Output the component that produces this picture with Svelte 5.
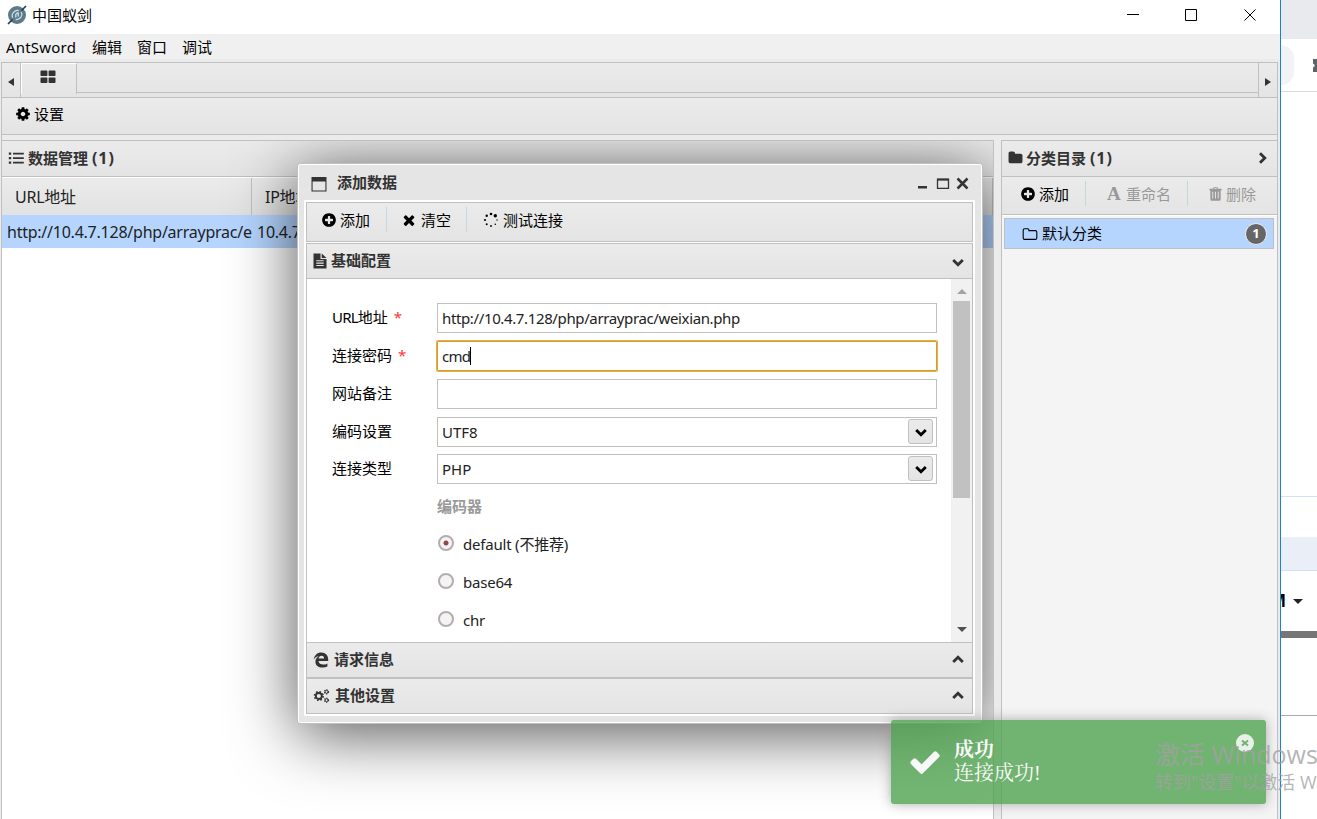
<script lang="ts">
	type Item = { icon: string; label: string; off?: boolean };

	const menu: string[] = ['AntSword', '编辑', '窗口', '调试'];

	const categoryTools: Item[] = [
		{ icon: 'plus', label: '添加' },
		{ icon: 'font', label: '重命名', off: true },
		{ icon: 'trash', label: '删除', off: true }
	];

	const dialogTools: Item[] = [
		{ icon: 'plus', label: '添加' },
		{ icon: 'times', label: '清空' },
		{ icon: 'spinner', label: '测试连接' }
	];

	const encoders: string[] = ['default (不推荐)', 'base64', 'chr'];
	let encoder = $state(encoders[0]);

	let toast = $state(true);
</script>

{#snippet icon(name: string)}
	{#if name == 'font'}
		<b class="icon-font">A</b>
	{:else}
		<svg class="icon {name}" viewBox={['plus', 'cog', 'times', 'check', 'folder'].includes(name) ? '0 0 1792 1792' : '0 0 16 16'}>
			{#if name == 'plus'}
				<path d="M1344 960v-128q0-26-19-45t-45-19h-256v-256q0-26-19-45t-45-19h-128q-26 0-45 19t-19 45v256h-256q-26 0-45 19t-19 45v128q0 26 19 45t45 19h256v256q0 26 19 45t45 19h128q26 0 45-19t19-45v-256h256q26 0 45-19t19-45zm320-64q0 209-103 385.5t-279.5 279.5-385.5 103-385.5-103-279.5-279.5-103-385.5 103-385.5 279.5-279.5 385.5-103 385.5 103 279.5 279.5 103 385.5z" />
			{:else if name == 'cog'}
				<path d="M1152 896q0-106-75-181t-181-75-181 75-75 181 75 181 181 75 181-75 75-181zm512-109v222q0 12-8 23t-20 13l-185 28q-19 54-39 91 35 50 107 138 10 12 10 25t-9 23q-27 37-99 108t-94 71q-12 0-26-9l-138-108q-44 23-91 38-16 136-29 186-7 28-36 28h-222q-14 0-24.5-8.5t-11.5-21.5l-28-184q-49-16-90-37l-141 107q-10 9-25 9-14 0-25-11-126-114-165-168-7-10-7-23 0-12 8-23 15-21 51-66.5t54-70.5q-27-50-41-99l-183-27q-13-2-21-12.5t-8-23.5v-222q0-12 8-23t19-13l186-28q14-46 39-92-40-57-107-138-10-12-10-24 0-10 9-23 26-36 98.5-107.5t94.5-71.5q13 0 26 10l138 107q44-23 91-38 16-136 29-186 7-28 36-28h222q14 0 24.5 8.5t11.5 21.5l28 184q49 16 90 37l142-107q9-9 24-9 13 0 25 10 129 119 165 170 7 8 7 22 0 12-8 23-15 21-51 66.5t-54 70.5q26 50 41 98l183 28q13 2 21 12.5t8 23.5z" />
			{:else if name == 'times'}
				<path d="M1490 1322q0 40-28 68l-136 136q-28 28-68 28t-68-28l-294-294-294 294q-28 28-68 28t-68-28l-136-136q-28-28-28-68t28-68l294-294-294-294q-28-28-28-68t28-68l136-136q28-28 68-28t68 28l294 294 294-294q28-28 68-28t68 28l136 136q28 28 28 68t-28 68l-294 294 294 294q28 28 28 68z" />
			{:else if name == 'check'}
				<path d="M1671 566q0 40-28 68l-724 724-136 136q-28 28-68 28t-68-28l-136-136-362-362q-28-28-28-68t28-68l136-136q28-28 68-28t68 28l294 295 656-657q28-28 68-28t68 28l136 136q28 28 28 68z" />
			{:else if name == 'folder'}
				<path d="M1728 608v704q0 92-66 158t-158 66h-1216q-92 0-158-66t-66-158v-960q0-92 66-158t158-66h320q92 0 158 66t66 158v32h672q92 0 158 66t66 158z" />
			{:else if name == 'folder-o'}
				<path class="line" d="M1.2 12V4Q1.2 2.7 2.5 2.7H5.7Q6.9 2.7 6.9 4V4.6H13.3Q14.8 4.6 14.8 6V12Q14.8 13.4 13.3 13.4H2.6Q1.2 13.4 1.2 12Z" />
			{:else if name == 'grid'}
				<path d="M1.3 1.5H6.6Q7.4 1.500 7.400 2.300V6.200Q7.400 7 6.600 7H1.300Q.5 7 .5 6.200V2.300Q.5 1.500 1.300 1.500ZM9.400 1.500H14.700Q15.500 1.500 15.500 2.300V6.200Q15.500 7 14.700 7H9.400Q8.600 7 8.600 6.200V2.300Q8.600 1.500 9.400 1.500ZM1.300 8.500H6.600Q7.400 8.500 7.400 9.300V13.200Q7.400 14 6.600 14H1.300Q.5 14 .5 13.200V9.300Q.5 8.500 1.300 8.500ZM9.400 8.500H14.700Q15.500 8.500 15.500 9.300V13.200Q15.500 14 14.700 14H9.400Q8.600 14 8.600 13.200V9.300Q8.600 8.500 9.400 8.500Z" />
			{:else if name == 'bars'}
				<path d="M.8 2.5h2.4v2.2H.8zM.8 7h2.4v2.2H.8zM.8 11.500h2.400v2.200H.8zM5 2.700h10.800v1.800H5zM5 7.200h10.800v1.800H5zM5 11.700h10.800v1.800H5z" />
			{:else if name == 'trash'}
				<path fill-rule="evenodd" d="M5.2 2.3 6 .8h4l.8 1.5h3.7v1.9h-1v9.400q0 1.600-1.500 1.600H4q-1.500 0-1.500-1.600V4.200h-1V2.300ZM6.500 2.300h3L9.200 1.700H6.800ZM4.600 5.600V12.800h1V5.600ZM7.500 5.600V12.800h1V5.600ZM10.400 5.600V12.800h1V5.600Z" />
			{:else if name == 'spinner'}
				<circle cx="8" cy="2" r="1.300" />
				<circle cx="12.300" cy="3.700" r="1.700" />
				<circle cx="14" cy="8" r=".7" />
				<circle cx="12.300" cy="12.300" r=".8" />
				<circle cx="8" cy="14" r=".9" />
				<circle cx="3.700" cy="12.300" r="1" />
				<circle cx="2" cy="8" r="1.100" />
				<circle cx="3.700" cy="3.700" r="1.200" />
			{:else if name == 'file'}
				<path fill-rule="evenodd" d="M1.500 .5H8.500V6H14.500V15.500H1.500ZM9.700 .5 14.500 4.900H9.700ZM4.300 7.200V8.300H11.700V7.200ZM4.300 9.600V10.700H11.700V9.600ZM4.300 12V13.100H11.700V12Z" />
			{:else if name == 'edge'}
				<path d="M.7 7.600C1.300 3.200 4.300 .5 8.300 .5C12.600 .5 15.200 3.400 15.200 7.400V9.100H5.500C5.700 11.500 7.800 12.600 10.200 12.600C11.800 12.600 13.100 12.200 14.400 11.400V14.500C13 15.200 11.500 15.600 9.700 15.600C5.300 15.600 2.400 13.400 2.400 9.700C2.400 7.300 3.700 5.400 5.700 4.300C3.600 4.400 1.900 5.600 .7 7.600ZM5.600 6.500H11.100C11.100 4.700 10.200 3.700 8.500 3.700C6.900 3.700 5.900 4.800 5.600 6.500Z" fill-rule="evenodd" />
			{:else if name == 'cogs'}
				<circle class="teeth" cx="5.300" cy="8" r="4.300" />
				<circle class="ring" cx="5.300" cy="8" r="3" />
				<circle class="teeth s" cx="13" cy="3.800" r="2" />
				<circle class="ring s" cx="13" cy="3.800" r="1.500" />
				<circle class="teeth s" cx="13" cy="12.200" r="2" />
				<circle class="ring s" cx="13" cy="12.200" r="1.500" />
			{:else if name == 'chevron'}
				<path class="thick" d="M3.200 6 8 10.800 12.800 6" />
			{:else if name == 'pane'}
				<path fill-rule="evenodd" d="M.5 1H15.500V15.500H.5ZM1.600 5.500V14.400H14.400V5.500Z" />
			{/if}
		</svg>
	{/if}
{/snippet}

{#snippet tools(items: Item[])}
	{#each items as item, i}
		{#if i}<i class="sep"></i>{/if}
		<span class="tool" class:off={item.off}>{@render icon(item.icon)}{item.label}</span>
	{/each}
{/snippet}

<div class="desktop">
	<div class="window">
		<header class="title">
			<svg class="logo" viewBox="0 0 20 20">
				<circle cx="10" cy="10" r="9" fill="#5c7c8c" />
				<ellipse cx="10" cy="10" rx="5" ry="4.300" fill="none" stroke="#d5e0e5" stroke-width="1.300" stroke-dasharray="11 3.600" transform="rotate(-35 10 10)" />
				<path d="M8.800 12.500V9.500Q10 7.300 11.300 8V11.500" fill="none" stroke="#d5e0e5" stroke-width="1.300" />
				<path d="M1 19 5.500 14.500M14.500 5.500 19 1" stroke="#263c48" stroke-width="1.600" />
			</svg>
			<span>中国蚁剑</span>
			<svg class="controls" viewBox="0 0 130 14">
				<path d="M0 6.500H12M58.500 1.500H69.500V12.500H58.500ZM117.500 1.500 128.500 12.500M128.500 1.500 117.500 12.500" fill="none" stroke="#000" />
			</svg>
		</header>
		<nav>
			{#each menu as label}<span>{label}</span>{/each}
		</nav>

		<div class="frame">
			<div class="tabs">
				<div class="arrow"><i class="left"></i></div>
				<div class="tab">{@render icon('grid')}</div>
				<div class="track"></div>
				<div class="arrow end"><i class="right"></i></div>
			</div>
			<div class="bar settings"><span class="tool">{@render icon('cog')}设置</span></div>

			<div class="columns">
				<section class="data">
					<h2>{@render icon('bars')}<span>数据管理 <em>(1)</em></span></h2>
					<div class="row head"><span>URL地址</span><span>IP地址</span></div>
					<div class="row"><span>http://10.4.7.128/php/arrayprac/e</span><span>10.4.7.128</span></div>

					<div class="dialog">
						<div class="caption">
							{@render icon('pane')}<span>添加数据</span>
							<svg class="buttons" viewBox="0 0 52 14">
								<path d="M0 10H9V12.500H0Z" fill="#333" />
								<path d="M19.500 3.500H30.500V12.300H19.500Z" fill="none" stroke="#333" stroke-width="1.300" />
								<path d="M19 2.500H31V4.500H19Z" fill="#333" />
								<path d="M39.500 2.500 49.500 12.500M49.500 2.500 39.500 12.500" stroke="#333" stroke-width="2.500" />
							</svg>
						</div>
						<div class="content">
							<div class="bar">{@render tools(dialogTools)}</div>
							<h3 class="open">{@render icon('file')}<span>基础配置</span>{@render icon('chevron')}</h3>
							<div class="body">
								<div class="form">
									<div class="field"><span><s>URL</s>地址 <em>*</em></span><div class="input url">http://10.4.7.128/php/arrayprac/weixian.php</div></div>
									<div class="field"><span>连接密码 <em>*</em></span><div class="input url focus">cmd<i></i></div></div>
									<div class="field"><span>网站备注</span><div class="input"></div></div>
									<div class="field"><span>编码设置</span><div class="input">UTF8<u>{@render icon('chevron')}</u></div></div>
									<div class="field"><span>连接类型</span><div class="input">PHP<u>{@render icon('chevron')}</u></div></div>
									<div class="encoder">
										<strong>编码器</strong>
										{#each encoders as name}
											<button onclick={() => (encoder = name)}>
												<i class:on={encoder == name}></i><span>{name}</span>
											</button>
										{/each}
									</div>
								</div>
								<div class="scroll"><i class="up"></i><div class="thumb"></div><i class="down"></i></div>
							</div>
							<h3>{@render icon('edge')}<span>请求信息</span>{@render icon('chevron')}</h3>
							<h3>{@render icon('cogs')}<span>其他设置</span>{@render icon('chevron')}</h3>
						</div>
					</div>
				</section>
				<section class="category">
					<h2>{@render icon('folder')}<span>分类目录 <em>(1)</em></span>{@render icon('chevron')}</h2>
					<div class="bar">{@render tools(categoryTools)}</div>
					<div class="list">
						<div class="entry">{@render icon('folder-o')}<span>默认分类</span><b class="count">1</b></div>
					</div>
				</section>
			</div>
		</div>
	</div>

	<!-- browser window peeking out behind -->
	<aside>
		<div class="strip"></div>
		<div class="address"><i class="round"></i>
			<svg viewBox="0 0 16 16"><path d="M0 2H4.500Q6 4.500 8 2H16V15H8Q6 12 4.500 15H0V10.500Q3.500 8.500 0 6.500Z" fill="#5f6368" /></svg>
		</div>
		<div class="page"></div>
		<div class="band"></div>
		<div class="select"><b>M</b><i class="down"></i></div>
		<div class="thick"></div>
		<div class="rest"></div>
	</aside>

	{#if toast}
		<div class="toast">
			{@render icon('check')}
			<div><strong>成功</strong><span>连接成功!</span></div>
			<button class="close" aria-label="close" onclick={() => (toast = false)}>
				<svg viewBox="0 0 18 18"><circle cx="9" cy="9" r="9" fill="#fff" fill-opacity=".85" /><path d="M6 6.500 12 11.500M12 6.500 6 11.500" stroke="#51a351" stroke-width="2" /></svg>
			</button>
		</div>
	{/if}

	<div class="activate"><span>激活 Windows</span><small>转到"设置"以激活 W</small></div>
</div>

<style>
	:global(body) {
		overflow: hidden;
		background: #fff;
	}
	.desktop {
		position: relative;
		display: flex;
		width: 1317px;
		height: 819px;
		overflow: hidden;
		font: 15px/20px "Noto Sans", "Noto Sans CJK SC", sans-serif;
		color: #000;
		white-space: nowrap;
	}
	.desktop :global(*) {
		box-sizing: border-box;
	}
	.window {
		display: flex;
		flex: none;
		flex-direction: column;
		width: 1281px;
		height: 819px;
		border-right: 1px solid #1683d8;
		background: #ebebeb;
	}
	h2, h3 {
		margin: 0;
		font-size: 15px;
		font-weight: 700;
		color: #333;
	}
	em {
		font-style: normal;
	}
	.icon {
		flex: none;
		width: 16px;
		height: 16px;
		fill: currentColor;
	}
	.icon .line, .icon .thick, .icon .teeth, .icon .ring {
		fill: none;
		stroke: currentColor;
		stroke-width: 1.1;
	}
	.icon .thick {
		stroke-width: 2.8;
	}
	.icon .teeth {
		stroke-width: 1.6;
		stroke-dasharray: 1.7 1.68;
	}
	.icon .ring {
		stroke-width: 1.8;
	}
	.icon .teeth.s {
		stroke-width: 1.2;
		stroke-dasharray: 1.05 1.05;
	}
	.icon .ring.s {
		stroke-width: 1;
	}

	.title {
		display: flex;
		align-items: center;
		height: 34px;
		padding: 0 23px 4px 7px;
		background: #fff;
	}
	.title span {
		margin: -1px 0 0 5px;
	}
	.logo {
		width: 20px;
		height: 20px;
	}
	.controls {
		width: 130px;
		height: 14px;
		margin-left: auto;
	}
	nav {
		display: flex;
		gap: 15px;
		height: 25px;
		padding: 3px 6px;
		background: #f0f0f0;
	}
	nav span:first-child {
		width: 71px;
		letter-spacing: .2px;
	}

	.frame {
		display: flex;
		flex: 1;
		flex-direction: column;
		min-height: 0;
		margin: 3px 2px 0 1px;
		border: solid #c0c0c0;
		border-width: 1px 1px 0;
	}
	.tabs {
		display: flex;
		height: 34px;
		background: linear-gradient(#ebebeb, #e4e4e4);
	}
	.arrow {
		display: flex;
		align-items: center;
		justify-content: center;
		width: 19px;
		padding-top: 3px;
		border-right: 1px solid #c0c0c0;
	}
	.arrow.end {
		border-right: 0;
		border-left: 1px solid #c0c0c0;
	}
	.arrow i, i.down, i.up {
		border: 4px solid transparent;
	}
	.arrow .left {
		border-left: 0;
		border-right: 6px solid #333;
	}
	.arrow .right {
		border-right: 0;
		border-left: 6px solid #333;
	}
	.tab {
		width: 56px;
		height: 31px;
		padding: 5px 0 0 18px;
		border: solid #fff;
		border-width: 1px 1px 0;
		border-right: 1px solid #c0c0c0;
		color: #333;
	}
	.track {
		flex: 1;
		height: 30px;
		border-bottom: 1px solid #c0c0c0;
	}
	.bar {
		display: flex;
		align-items: center;
		background: linear-gradient(#ebebeb, #e4e4e4);
	}
	.settings {
		height: 38px;
		padding: 0 13px 4px;
		border: solid #c0c0c0;
		border-width: 1px 0;
	}
	.tool {
		display: flex;
		align-items: center;
		gap: 3px;
	}
	.tool.off {
		color: #999;
	}
	.icon-font {
		width: 17px;
		padding-left: 1px;
		font: bold 19px/20px "Liberation Serif", serif;
	}
	.icon.trash {
		width: 15px;
	}
	.sep {
		width: 1px;
		height: 25px;
		background: #c4d8de;
	}

	.columns {
		display: flex;
		flex: 1;
		gap: 7px;
		min-height: 0;
		margin-top: 5px;
	}
	section {
		display: flex;
		flex: none;
		flex-direction: column;
		border-top: 1px solid #c0c0c0;
	}
	h2 {
		display: flex;
		align-items: center;
		height: 36px;
		padding: 0 7px 1px 6px;
		border-bottom: 1px solid #c0c0c0;
		background: linear-gradient(#ebebeb, #e4e4e4);
	}
	h2 span {
		flex: 1;
		margin: -1px 0 0 4px;
	}
	h2 em {
		font-size: 16px;
		letter-spacing: 1px;
	}
	h2 .folder {
		width: 15px;
		margin-right: -1px;
	}
	h2 .chevron {
		transform: rotate(-90deg);
	}
	.data {
		position: relative;
		width: 992px;
		overflow: hidden;
		border-right: 1px solid #c0c0c0;
		background: #fff;
	}
	.row {
		display: grid;
		grid-template-columns: 250px 1fr;
		align-items: center;
		height: 33px;
		background: #b5d5ff;
	}
	.row span {
		padding: 1px 0 0 5px;
		font-size: 16px;
		color: #222;
		letter-spacing: -.24px;
	}
	.row.head {
		height: 38px;
		border-top: 1px solid #fff;
		background: linear-gradient(#ebebeb, #e2e2e2);
	}
	.row.head span {
		height: 37px;
		padding-left: 13px;
		line-height: 37px;
		border-right: 1px solid #c0c0c0;
	}
	.category {
		width: 276px;
		border-left: 1px solid #c0c0c0;
		background: #f4f4f4;
	}
	.category .bar {
		height: 38px;
		padding: 0 18px 4px;
		border-bottom: 1px solid #c0c0c0;
	}
	.category .sep {
		margin: 0 20px 0 16px;
	}
	.list {
		padding: 2px 3px 3px 2px;
		border-top: 1px solid #fff;
	}
	.entry {
		display: flex;
		align-items: center;
		height: 31px;
		padding: 0 6px 0 17px;
		border: 1px solid #c0c0c0;
		background: #b5d5ff;
	}
	.entry span {
		flex: 1;
		margin: -2px 0 0 4px;
	}
	.count {
		width: 22px;
		height: 22px;
		border: 1px solid #eee;
		border-radius: 50%;
		background: #666;
		color: #fff;
		font-size: 13px;
		line-height: 19px;
		text-align: center;
	}

	aside {
		display: flex;
		flex-direction: column;
		width: 36px;
		overflow: hidden;
		background: #fff;
	}
	.strip {
		height: 39px;
		background: #e8eaed;
	}
	.address {
		display: flex;
		align-items: center;
		height: 53px;
		border-bottom: 1px solid #dcdcdc;
	}
	.round {
		flex: none;
		width: 13px;
		height: 40px;
		margin-right: 19px;
		border-radius: 0 20px 20px 0;
		background: #f1f3f4;
	}
	.address svg {
		flex: none;
		width: 16px;
		height: 16px;
	}
	.page {
		height: 405px;
		border-bottom: 1px solid #cfe1fb;
	}
	.band {
		height: 34px;
		margin-top: 40px;
		border-bottom: 1px solid #cfe1fb;
		background: #eaeef7;
	}
	.select {
		display: flex;
		align-items: center;
		height: 60px;
	}
	.select b {
		display: flex;
		justify-content: flex-end;
		width: 5px;
		margin-right: 7px;
		overflow: hidden;
		font-size: 17px;
	}
	aside .down {
		border: 5px solid transparent;
		border-top-color: #222;
		border-bottom: 0;
	}
	aside .thick {
		height: 7px;
		background: #767676;
	}
	.rest {
		height: 78px;
		border-bottom: 1px solid #aaa;
	}

	.dialog {
		position: absolute;
		left: 295px;
		top: 22px;
		width: 686px;
		height: 561px;
		padding: 0 7px 7px 6px;
		border: 1px solid #c0c0c0;
		border-radius: 3px;
		background: #e5e5e5;
		box-shadow: inset 0 0 0 1px #fff, 0 10px 65px rgba(0, 0, 0, .67);
	}
	.caption {
		display: flex;
		height: 36px;
		padding: 12px 5px 0 7px;
		color: #333;
	}
	.caption span {
		flex: 1;
		margin: -4px 0 0 10px;
		font-weight: 700;
	}
	.buttons {
		width: 52px;
		height: 14px;
	}
	.content {
		display: flex;
		flex-direction: column;
		height: 516px;
		padding: 2px;
		background: #fff;
	}
	.dialog .bar {
		height: 40px;
		margin-bottom: 1px;
		padding: 0 14px 5px;
		border: 1px solid #c0c0c0;
	}
	.dialog .sep {
		margin: 0 14px 0 16px;
	}
	.dialog .times {
		margin-right: 1px;
	}
	.dialog .sep:nth-of-type(2) {
		margin: 0 16px 0 15px;
	}
	.spinner {
		margin-right: 1px;
	}
	h3 {
		display: flex;
		align-items: center;
		height: 36px;
		padding: 0 6px 1px;
		border: 1px solid #c0c0c0;
		background: linear-gradient(#ebebeb, #e4e4e4);
	}
	h3 span {
		flex: 1;
		margin: -2px 0 0 5px;
	}
	h3 .file {
		margin: 0 -2px 0 -1px;
	}
	h3 .cogs {
		width: 17px;
	}
	h3 .chevron {
		transform: rotate(180deg);
	}
	h3.open .chevron {
		margin-top: 3px;
		transform: none;
	}
	.body {
		display: flex;
		height: 363px;
		border: solid #c0c0c0;
		border-width: 0 1px;
	}
	.form {
		flex: 1;
		padding: 24px 13px 0 25px;
	}
	.field {
		display: grid;
		grid-template-columns: 105px 500px;
		height: 38px;
	}
	.field:nth-child(4) {
		height: 37px;
	}
	.field > span {
		line-height: 28px;
	}
	.field em {
		margin-left: 2px;
		color: #f33;
	}
	.field s {
		letter-spacing: -.8px;
		text-decoration: none;
	}
	.input {
		display: flex;
		height: 30px;
		padding: 0 1px 0 4px;
		border: 1px solid #c0c0c0;
		line-height: 29px;
		color: #222;
	}
	.input.url {
		letter-spacing: -.37px;
	}
	.input.focus {
		border-color: #d99a2b;
		border-radius: 1px;
		box-shadow: 0 0 0 1px #e5b04c;
		letter-spacing: -.8px;
	}
	.focus i {
		width: 1px;
		height: 18px;
		margin-top: 5px;
		background: #000;
	}
	.input u {
		display: flex;
		align-items: center;
		justify-content: center;
		width: 25px;
		height: 25px;
		margin: 1px 2px 0 auto;
		border: 1px solid #c0c0c0;
		border-radius: 3px;
		background: linear-gradient(#ebebeb, #e4e4e4);
		color: #000;
	}
	.encoder {
		display: flex;
		flex-direction: column;
		padding-left: 105px;
	}
	strong {
		font-weight: 700;
	}
	.encoder strong {
		height: 33px;
		padding-top: 4px;
		color: #999;
	}
	button {
		padding: 0;
		border: 0;
		background: none;
		color: #222;
		font: inherit;
	}
	.encoder button {
		display: flex;
		align-items: center;
		height: 38px;
		letter-spacing: -.2px;
	}
	.encoder i {
		width: 16px;
		height: 16px;
		margin: -2px 9px 0 1px;
		border: 2px solid #b5adad;
		border-radius: 50%;
		background: #f4f4f4;
	}
	.encoder i.on {
		background: radial-gradient(circle, #904848 2px, #f4f4f4 3px);
	}
	.scroll {
		display: flex;
		flex-direction: column;
		align-items: center;
		width: 21px;
		background: #f1f1f1;
	}
	.scroll .up {
		margin: 10px 0 7px;
		border: 5px solid transparent;
		border-top: 0;
		border-bottom-color: #a3a3a3;
	}
	.thumb {
		width: 17px;
		height: 197px;
		background: #c1c1c1;
	}
	.scroll .down {
		margin: auto 0 10px;
		border: 5px solid transparent;
		border-bottom: 0;
		border-top-color: #505050;
	}

	.toast {
		position: absolute;
		left: 891px;
		top: 720px;
		display: flex;
		width: 375px;
		height: 84px;
		padding: 18px 12px 0 17px;
		border-radius: 3px;
		background: #51a351;
		box-shadow: 0 0 12px #999;
		color: #fff;
		opacity: .8;
	}
	.toast .check {
		width: 34px;
		height: 34px;
		margin-top: 7px;
	}
	.toast div {
		display: flex;
		flex: 1;
		flex-direction: column;
		margin-left: 12px;
		font: 20px/23px "Liberation Serif", "Noto Serif CJK SC", "Noto Sans CJK SC", serif;
	}
	.toast strong {
		padding-top: 1px;
	}
	.close {
		width: 18px;
		height: 18px;
		margin-top: -4px;
	}
	.close svg {
		display: block;
	}
	.activate {
		position: absolute;
		left: 1155px;
		top: 737px;
		display: flex;
		flex-direction: column;
		color: rgba(162, 162, 162, .8);
		font-family: "Open Sans", "Noto Sans CJK SC", sans-serif;
		font-size: 25px;
		line-height: 34px;
	}
	.activate small {
		font-size: 18px;
		line-height: 22px;
	}
</style>
